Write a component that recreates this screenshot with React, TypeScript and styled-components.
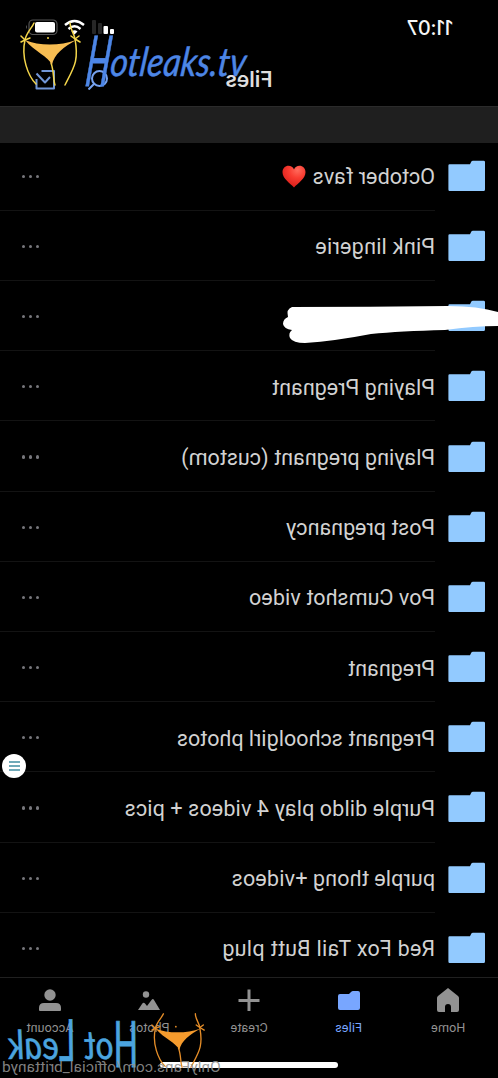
import React from "react";
import styled, { createGlobalStyle } from "styled-components";

const GlobalStyle = createGlobalStyle`
  html, body { margin: 0; padding: 0; background: #000; overflow: hidden; }
  * { box-sizing: border-box; }
`;

const Screen = styled.div`
  position: relative;
  width: 498px;
  height: 1078px;
  overflow: hidden;
  background: #000;
  color: #d2d2d2;
  font-family: Roboto, "Liberation Sans", sans-serif;
`;

const Mirror = styled.div`
  width: 100%;
  height: 100%;
  display: flex;
  flex-direction: column;
  transform: scaleX(-1);
`;

const StatusBar = styled.div`
  height: 53px;
  flex: none;
  display: flex;
  justify-content: space-between;
  align-items: flex-start;
  padding: 16px 25px 0 45px;
`;

const Clock = styled.div`
  font: 500 20px/24px Inter, sans-serif;
  letter-spacing: -0.1px;
  color: #f5f5f5;
`;

const StatusIcons = styled.svg`
  display: block;
  margin-top: 2px;
`;

const TitleBar = styled.div`
  height: 53px;
  flex: none;
  display: grid;
  grid-template-columns: 1fr auto 1fr;
  align-items: center;
  padding-right: 35px;
  padding-left: 35px;
`;

const Title = styled.h1`
  grid-column: 2;
  margin: 0;
  font: 600 21px/24px Inter, sans-serif;
  letter-spacing: -0.1px;
  color: #dedede;
`;

const TitleActions = styled.div`
  justify-self: end;
  display: flex;
  gap: 33px;
  svg { display: block; }
`;

const Band = styled.div`
  position: relative;
  z-index: 1;
  flex: none;
  height: 37px;
  background: #1f1f1f;
  border-top: 1px solid #2b2b2b;
`;

const List = styled.div`
  flex: none;
  height: 836px;
  margin-top: -2.3px;
  overflow: hidden;
`;

const Row = styled.div`
  height: 70.2px;
  display: flex;
  align-items: center;
  padding-left: 13px;
`;

const RowBody = styled.div`
  flex: 1;
  height: 100%;
  margin-left: 13px;
  padding: 2px 22px 0 0;
  display: flex;
  align-items: center;
  justify-content: space-between;
  border-bottom: 1px solid #131313;
`;

const Name = styled.div<{ $spacing: number }>`
  display: flex;
  align-items: center;
  gap: 7px;
  font-size: 21.5px;
  line-height: 28px;
  padding-top: 2px;
  white-space: pre;
  letter-spacing: ${(p) => p.$spacing}px;
  svg { margin-bottom: 2px; }
`;

const Dots = styled.div`
  display: flex;
  gap: 3.6px;
  i { width: 3.2px; height: 3.2px; border-radius: 50%; background: #77777c; }
`;

const TabBar = styled.nav`
  flex: none;
  height: 101px;
  display: flex;
  border-top: 1px solid #202020;
  position: relative;
`;

const Tab = styled.div<{ $active?: boolean }>`
  flex: 1;
  display: flex;
  flex-direction: column;
  align-items: center;
  padding-top: 10px;
  color: ${(p) => (p.$active ? "#78a6ff" : "#929292")};
  svg { display: block; }
  span { font-size: 12.5px; line-height: 16px; margin-top: 7px; letter-spacing: 0.15px; }
`;

const HomeIndicator = styled.div`
  position: absolute;
  left: 160px;
  top: 84px;
  width: 178px;
  height: 6px;
  border-radius: 3px;
  background: #fff;
`;

const Overlay = styled.svg<{ $x: number; $y: number }>`
  position: absolute;
  left: ${(p) => p.$x}px;
  top: ${(p) => p.$y}px;
`;

const Mark = styled.div<{ $color: string }>`
  position: absolute;
  font: italic 400 40px/56px Lato, sans-serif;
  color: ${(p) => p.$color};
  white-space: pre;
  -webkit-text-stroke: 0.5px ${(p) => p.$color};
`;

const TopMark = styled(Mark)`
  left: 87px;
  top: 33px;
  transform-origin: 0 50%;
  transform: scaleX(0.845) skewX(-8deg);
`;

const BottomMark = styled(Mark)`
  left: 8px;
  top: 1016px;
  transform-origin: 0 50%;
  transform: scaleX(-0.87) translateX(-100%) skewX(4deg);
`;

const Capital = styled.span<{ $stretch: number; $drop?: number }>`
  display: inline-block;
  transform: translateY(${(p) => p.$drop ?? 0}px) scaleY(${(p) => p.$stretch});
`;

const Handle = styled.div`
  position: absolute;
  left: 2px;
  top: 1057px;
  font: 400 15.5px/20px Roboto, sans-serif;
  color: rgba(145, 145, 145, 0.9);
  white-space: nowrap;
  transform: scaleX(-1);
`;

const MenuBadge = styled.div`
  position: absolute;
  left: 2px;
  top: 754px;
  width: 24px;
  height: 24px;
  border-radius: 50%;
  background: #fff;
  display: flex;
  flex-direction: column;
  align-items: center;
  justify-content: center;
  gap: 2px;
  i { width: 11px; height: 2px; background: #70a9b8; }
`;

const Folder = () => (
  <svg width="37" height="32" viewBox="0 0 37 32">
    <path d="M0 2Q0 .7 1.400 .7H12Q13.200 .7 13.800 1.800L15 4.200H35.400Q36.600 4.200 36.600 5.600V29.400Q36.600 31 35.400 31H1.400Q0 31 0 29.400Z" fill="#92caff" />
  </svg>
);

const Heart = () => (
  <svg width="24" height="23" viewBox="0 0 24 23">
    <defs>
      <radialGradient id="heart" cx="35%" cy="20%" r="80%">
        <stop offset="0" stopColor="#ff6a5c" />
        <stop offset=".45" stopColor="#f93c31" />
        <stop offset="1" stopColor="#d91f1b" />
      </radialGradient>
    </defs>
    <path d="M12 22.500C8 18 .5 13.500 .5 7.200C.5 3.400 3.200 .8 6.500 .8C9 .8 11 2.200 12 4.400C13 2.200 15 .8 17.500 .8C20.800 .8 23.500 3.400 23.500 7.200C23.500 13.500 16 18 12 22.500Z" fill="url(#heart)" />
  </svg>
);

const Bikini = ({ color, strings }: { color: string; strings: string }) => (
  <>
    <g fill="none" stroke={strings} strokeWidth="1.500" strokeLinecap="round">
      <path d="M14 2C12 7 6 12 5 19C1 36 8 55 16 63" />
      <path d="M50 2C50 8 54 12 55 18C59 40 54 46 45 64" />
      <path d="M5 19L1 15M5 19L1 21M5 19l5-2M55 18l-4-3M55 18l4-3M55 18l5 3" />
      <path d="M31 42C34 50 33 58 35 64" />
    </g>
    <path d="M5 19C19 25 40 25 56 19C44 26 34 33 32 44C28 35 15 31 5 19Z" fill={color} />
    <circle cx="28" cy="17" r="1" fill={strings} />
  </>
);

const files: { name: string; heart?: boolean; spacing: number }[] = [
  { name: "October favs", heart: true, spacing: 0.05 },
  { name: "Pink lingerie", spacing: 0.25 },
  { name: "", spacing: 0 },
  { name: "Playing Pregnant", spacing: 0.1 },
  { name: "Playing pregnant (custom)", spacing: 0.06 },
  { name: "Post pregnancy", spacing: 0.02 },
  { name: "Pov Cumshot video", spacing: 0.06 },
  { name: "Pregnant", spacing: 0.05 },
  { name: "Pregnant schoolgirl photos", spacing: 0.03 },
  { name: "Purple dildo play 4 videos + pics", spacing: 0.14 },
  { name: "purple thong +videos", spacing: 0.15 },
  { name: "Red Fox Tail Butt plug", spacing: 0.3 },
];

const tabs = [
  { label: "Home", icon: <path d="M12 0L22 8Q23 9 23 10V22Q23 24 21 24H15V19Q15 16 12 16T9 19V24H3Q1 24 1 22V10Q1 9 2 8Z" /> },
  { label: "Files", active: true, icon: <path d="M1 5Q1 3 3 3H8Q9 3 10 4L12 6H21Q23 6 23 8V20Q23 22 21 22H3Q1 22 1 20Z" /> },
  { label: "Create", icon: <path d="M10.500 1.500h3v9.500h9v3h-9v9h-3v-9h-9v-3h9Z" /> },
  { label: "Photos", icon: <><circle cx="15" cy="6.500" r="3.200" /><path d="M1 22L7 12Q8 10 9.500 12L14 18L16 15.500Q17.500 14 19 16L23 22Z" /></> },
  { label: "Account", icon: <><circle cx="12" cy="7" r="5.700" /><path d="M1 22V20Q1 15 6 15H18Q23 15 23 20V22Q23 23 22 23H2Q1 23 1 22Z" /></> },
];

export default function App() {
  return (
    <>
      <GlobalStyle />
      <Screen>
        <Mirror>
          <StatusBar>
            <Clock>11:07</Clock>
            <StatusIcons width="89" height="20" viewBox="-3 0 89 20">
              <g fill="#fff">
                <rect x="-3" y="11" width="4" height="5" rx="1" />
                <rect x="3" y="8" width="4.500" height="8" rx="1" />
                <rect x="9" y="5" width="4" height="11" rx="1" fill="#272727" />
                <rect x="15" y="2" width="4" height="14" rx="1" fill="#272727" />
              </g>
              <g fill="none" stroke="#fff" strokeWidth="2.400">
                <path d="M27 7Q36.500 -1 46 7" />
                <path d="M30.500 11Q36.500 5.500 42.500 11" />
              </g>
              <path d="M33.500 13.500Q36.500 11 39.500 13.500L36.500 16.500Z" fill="#fff" />
              <rect x="54" y="2" width="28" height="14.500" rx="4" fill="none" stroke="#555" strokeWidth="1.200" />
              <rect x="56" y="4" width="20" height="10.500" rx="2" fill="#fff" />
              <path d="M84 7Q86 9 84 11Z" fill="#555" />
            </StatusIcons>
          </StatusBar>
          <TitleBar>
            <Title>Files</Title>
            <TitleActions>
              <svg width="20" height="20" viewBox="0 0 20 20" fill="none" stroke="#76a2ef" strokeWidth="2">
                <circle cx="8.500" cy="8.500" r="7.500" /><path d="M13.500 13.500L19.500 19.500" />
              </svg>
              <svg width="20" height="20" viewBox="0 0 20 20" fill="none" stroke="#7196d8" strokeWidth="2" strokeLinejoin="round">
                <path d="M13.500 1H1V18.500H18.500V9" /><path d="M5 7L10 12.500L18.500 3.500" />
              </svg>
            </TitleActions>
          </TitleBar>
          <Band />
          <List>
            {files.map((file, index) => (
              <Row key={index}>
                <Folder />
                <RowBody>
                  <Name $spacing={file.spacing}>{file.name}{file.heart && <Heart />}</Name>
                  <Dots><i /><i /><i /></Dots>
                </RowBody>
              </Row>
            ))}
          </List>
          <TabBar>
            {tabs.map((tab) => (
              <Tab key={tab.label} $active={tab.active}>
                <svg width="24" height="25" viewBox="0 0 24 25" fill="currentColor">{tab.icon}</svg>
                <span>{tab.label}</span>
              </Tab>
            ))}
            <HomeIndicator />
          </TabBar>
        </Mirror>
        <Overlay $x={280} $y={300} width="218" height="48" viewBox="280 300 218 48">
          <path d="M292 307Q370 307 448 306Q478 306 498 312V326Q474 326 445 330Q400 331 371 334Q335 341 305 343Q293 343 290 338Q288 333 292 330Q284 329 283 324Q283 319 288 317Q286 309 292 307Z" fill="#fff" />
        </Overlay>
        <Overlay $x={20} $y={21} width="62" height="66" viewBox="0 0 62 66">
          <Bikini color="#f8bd52" strings="#f3d54a" />
        </Overlay>
        <TopMark $color="#4d86e6"><Capital $stretch={1.75} $drop={-1}>H</Capital>otleaks.tv</TopMark>
        <BottomMark $color="#4ba4df"><Capital $stretch={1.6} $drop={-1}>H</Capital>ot <Capital $stretch={1.45} $drop={-5}>L</Capital>eak</BottomMark>
        <Overlay $x={151} $y={1012} width="55" height="57" viewBox="0 0 62 66" preserveAspectRatio="none">
          <Bikini color="#f59b2d" strings="#e58d28" />
        </Overlay>
        <Handle>OnlyFans.com/official_brittanyd</Handle>
        <MenuBadge><i /><i /><i /></MenuBadge>
      </Screen>
    </>
  );
}
